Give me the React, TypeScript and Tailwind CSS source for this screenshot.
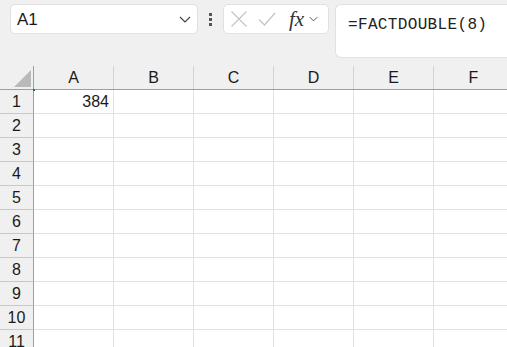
import React from "react";

const columns = ["A", "B", "C", "D", "E", "F"];
const rows = Array.from({ length: 11 }, (_, i) => i + 1);

const Chevron = ({ className }: { className?: string }) => (
  <svg className={className} viewBox="0 0 12 7" fill="none" stroke="#444" strokeWidth="1.2">
    <path d="M1 1l5 5 5-5" />
  </svg>
);

export default function App() {
  return (
    <div
      className="w-[507px] h-[347px] overflow-hidden bg-[#f0f0f0] text-[#1a1a1a]"
      style={{ fontFamily: '"Segoe UI", "Liberation Sans", Arial, sans-serif' }}
    >
      {/* formula bar */}
      <div className="flex items-start h-[66px] pt-[4px]">
        <div className="ml-[10px] w-[188px] h-[30px] flex items-center justify-between bg-white border border-[#e1e1e1] rounded-[5px] pl-[6px] pr-[6px]">
          <span className="text-[17px] leading-none">A1</span>
          <Chevron className="w-[12px] h-[7px]" />
        </div>
        <div className="w-[25px] h-[30px] flex flex-col items-center justify-center gap-[2px]">
          <div className="w-[3px] h-[3px] bg-[#555]" />
          <div className="w-[3px] h-[3px] bg-[#555]" />
          <div className="w-[3px] h-[3px] bg-[#555]" />
        </div>
        <div className="w-[106px] h-[30px] flex items-center bg-white border border-[#e1e1e1] rounded-[5px] pl-[6px]">
          <svg className="w-[18px] h-[18px]" viewBox="0 0 18 18" fill="none" stroke="#c4c4c4" strokeWidth="1.2">
            <path d="M1.5 1.5l15 15M16.5 1.5l-15 15" />
          </svg>
          <svg className="ml-[10px] w-[18px] h-[14px]" viewBox="0 0 18 14" fill="none" stroke="#c4c4c4" strokeWidth="1.2">
            <path d="M1 7.5l5.5 5.5L17 1" />
          </svg>
          <span
            className="ml-[13px] text-[21px] leading-none italic text-[#333]"
            style={{ fontFamily: '"Liberation Serif", "Times New Roman", serif' }}
          >
            fx
          </span>
          <Chevron className="ml-[5px] w-[9px] h-[6px]" />
        </div>
        <div className="ml-[6px] flex-1 h-[54px] bg-white border border-[#e1e1e1] rounded-l-[6px] border-r-0 pl-[12px] pt-[7px]">
          <span
            className="text-[16px] leading-[20px] tracking-[0.35px] text-[#222]"
            style={{ fontFamily: '"Liberation Mono", "Courier New", monospace' }}
          >
            =FACTDOUBLE(8)
          </span>
        </div>
      </div>

      {/* grid */}
      <div className="flex flex-col w-[514px]">
        <div className="flex h-[24px] border-b border-[#9e9e9e]">
          <div className="relative w-[34px] shrink-0 border-r border-[#9e9e9e]">
            <svg className="absolute left-[14px] top-[4px] w-[17px] h-[17px]" viewBox="0 0 17 17">
              <path d="M17 0V17H0Z" fill="#b9b9b9" />
            </svg>
            <div className="absolute right-[-2px] bottom-[-2px] w-[2px] h-[2px] bg-[#217346]" />
          </div>
          {columns.map((c) => (
            <div
              key={c}
              className="w-[80px] shrink-0 flex items-center justify-center border-r border-[#d4d4d4] text-[16px]"
            >
              {c}
            </div>
          ))}
        </div>
        {rows.map((r) => (
          <div key={r} className="flex h-[24px]">
            <div className="w-[34px] shrink-0 flex items-center justify-center border-r border-[#9e9e9e] border-b border-b-[#c8c8c8] text-[16px]">
              {r}
            </div>
            {columns.map((c) => (
              <div
                key={c}
                className="w-[80px] shrink-0 bg-white border-r border-b border-[#e1e1e1] flex items-center justify-end pr-[4px] text-[16px]"
              >
                {r === 1 && c === "A" ? "384" : ""}
              </div>
            ))}
          </div>
        ))}
      </div>
    </div>
  );
}
